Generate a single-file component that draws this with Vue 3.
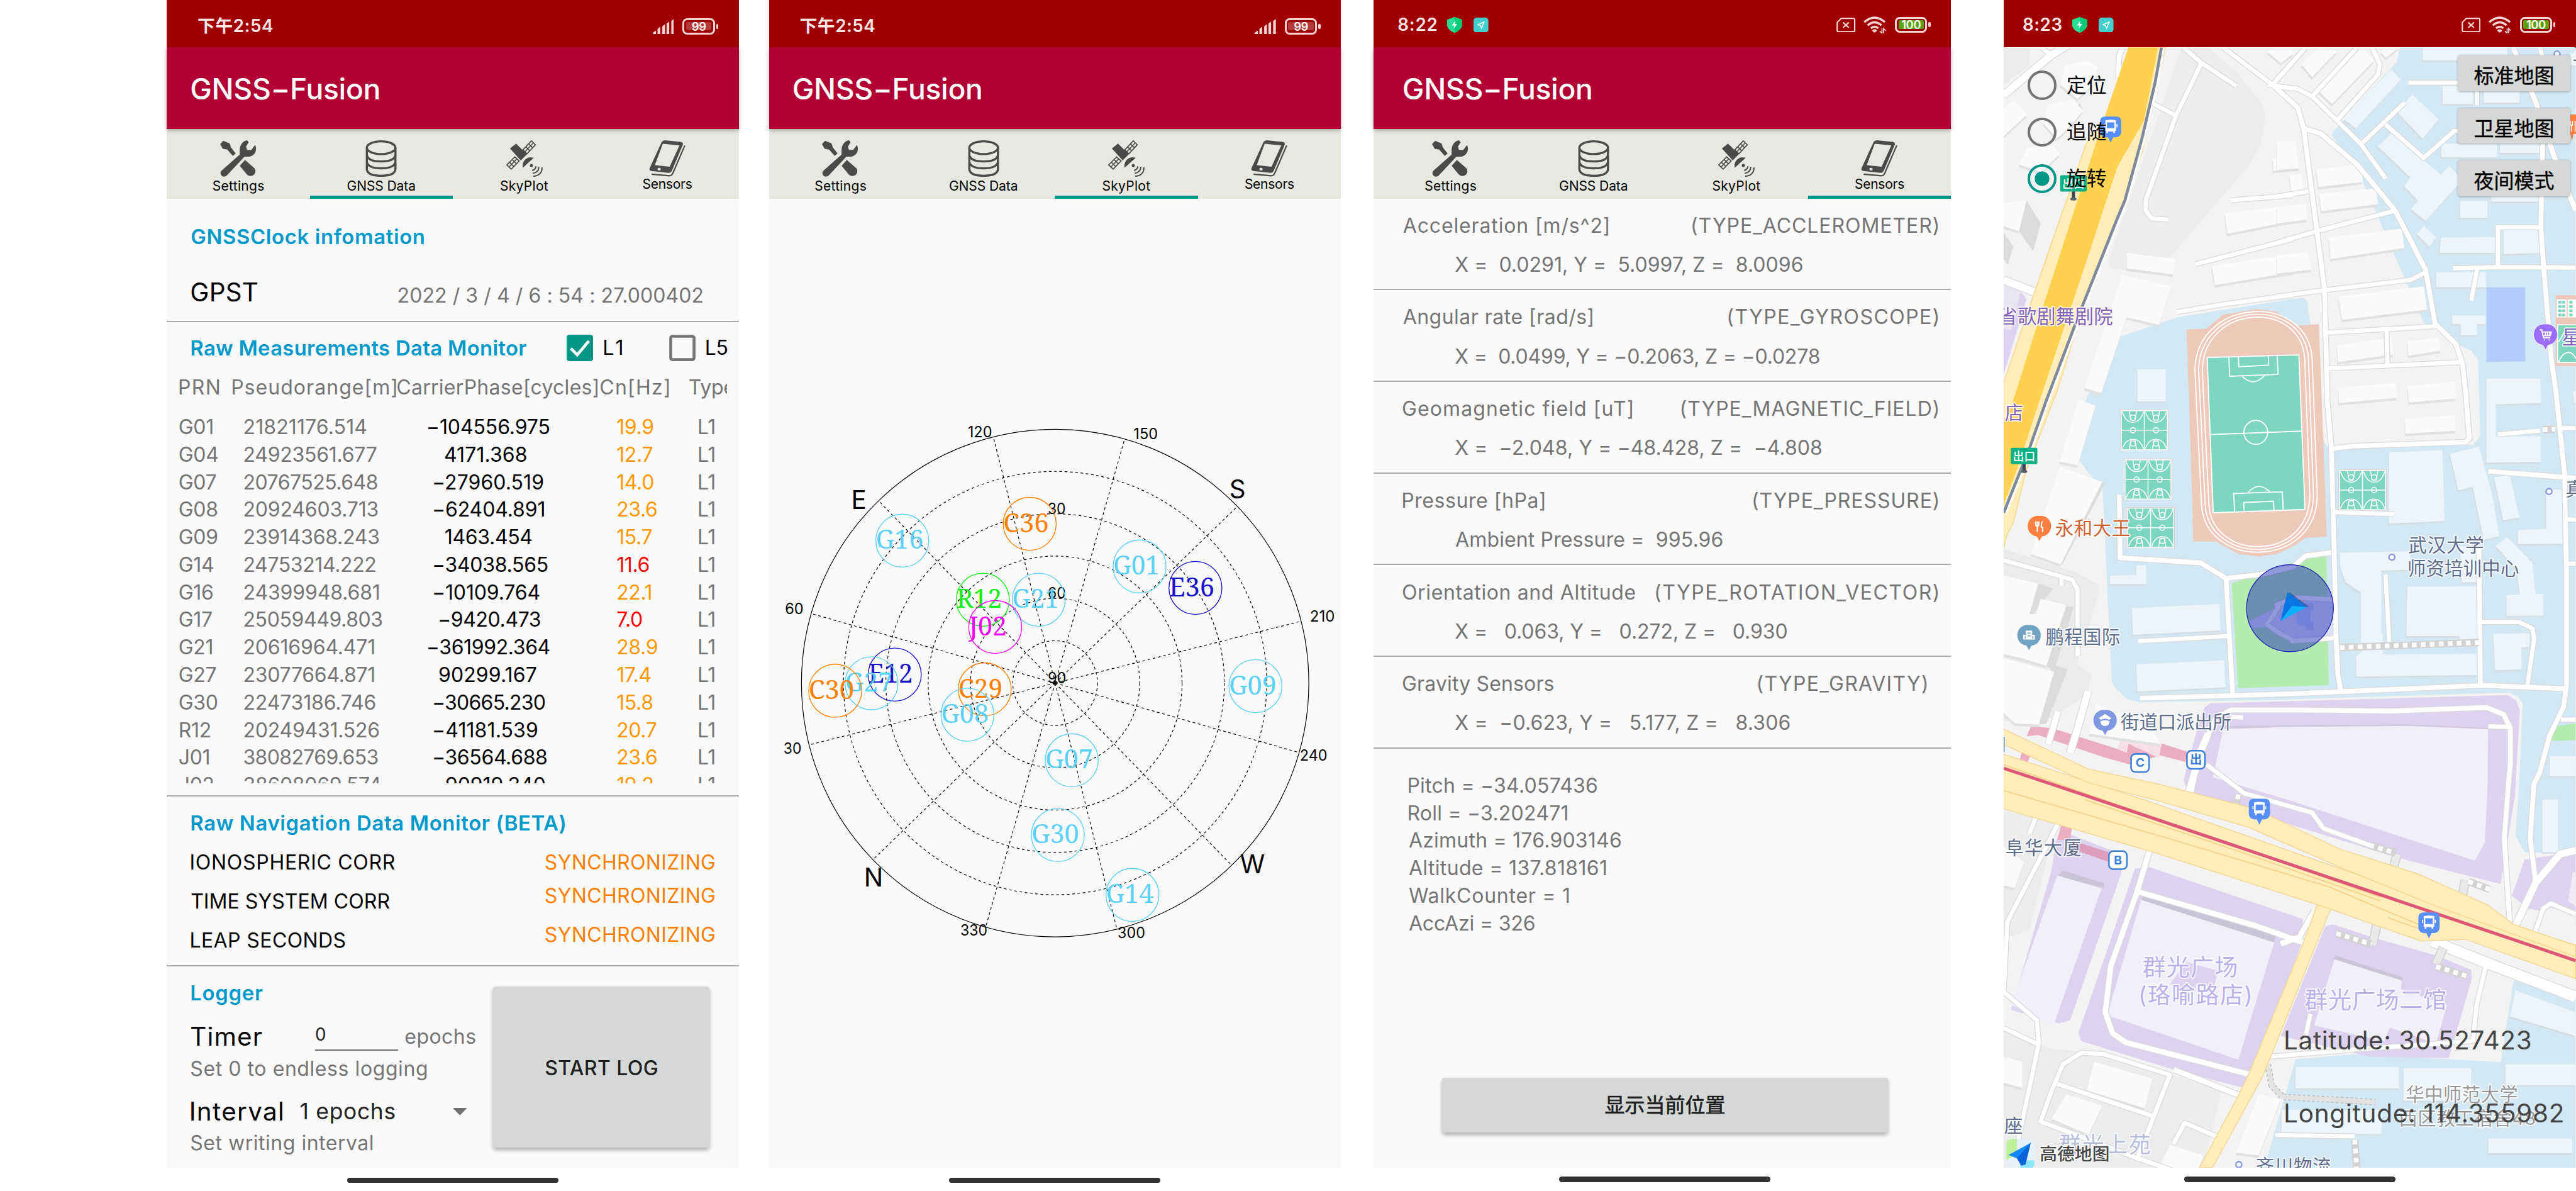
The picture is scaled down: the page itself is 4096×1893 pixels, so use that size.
<script setup>
// Spreads a label's letters so that its ink covers exactly the given width.
const pen = document.createElement('canvas').getContext('2d')
const fit = (el, { value }) => {
  if (!value) return
  const cs = getComputedStyle(el)
  const text = el.textContent
  pen.font = `${cs.fontWeight} ${cs.fontSize} ${cs.fontFamily}`
  const m = pen.measureText(text)
  const ink = m.actualBoundingBoxLeft + m.actualBoundingBoxRight
  const gap = (value - ink) / (text.length - 1)
  el.style.letterSpacing = `${gap.toFixed(3)}px`
  el.style.marginLeft = `${m.actualBoundingBoxLeft.toFixed(2)}px`
  el.style.marginRight = `${(m.actualBoundingBoxRight - m.width - gap).toFixed(2)}px`
}
const vFit = { mounted: fit, updated: fit }

const tabs = [
  { id: 'settings', label: 'Settings', w: 96 },
  { id: 'data', label: 'GNSS Data', w: 128 },
  { id: 'sky', label: 'SkyPlot', w: 90 },
  { id: 'sensors', label: 'Sensors', w: 92 },
]
const phones = [
  { key: 'data', tab: 1, time: '下午2:54', tw: 141, old: true },
  { key: 'sky', tab: 2, time: '下午2:54', tw: 141, old: true },
  { key: 'sensors', tab: 3, time: '8:22', tw: 73 },
  { key: 'map', tab: -1, time: '8:23', tw: 73 },
]

const rows = [
  ['G01', '21821176.514', '−104556.975', '19.9', 231, 229],
  ['G04', '24923561.677', '   4171.368', '12.7', 250, 154],
  ['G07', '20767525.648', ' −27960.519', '14.0', 252, 207],
  ['G08', '20924603.713', ' −62404.891', '23.6', 253, 209],
  ['G09', '23914368.243', '   1463.454', '15.7', 255, 164],
  ['G14', '24753214.222', ' −34038.565', '11.6', 248, 215],
  ['G16', '24399948.681', ' −10109.764', '22.1', 255, 200],
  ['G17', '25059449.803', '  −9420.473', '7.0', 261, 191],
  ['G21', '20616964.471', '−361992.364', '28.9', 246, 230],
  ['G27', '23077664.871', '  90299.167', '17.4', 246, 183],
  ['G30', '22473186.746', ' −30665.230', '15.8', 248, 210],
  ['R12', '20249431.526', ' −41181.539', '20.7', 255, 196],
  ['J01', '38082769.653', ' −36564.688', '23.6', 253, 214],
  ['J02', '38608069.574', ' −90919.340', '19.2', 258, 210],
].map(([prn, range, phase, cn, rw, pw]) => ({
  prn, range, cn, rw, pw,
  phase: phase.trim(),
  indent: (phase.length - phase.trimStart().length) * 10.8,
}))

const spokes = Array.from({ length: 12 }, (_, i) => {
  const a = ((15.9 + 30 * i) * Math.PI) / 180
  return [1992 + 477 * Math.sin(a), 1289 - 477 * Math.cos(a)]
})
const skyLabels = [
  ['120', 1827, 825, 46], ['150', 2140, 829, 46], ['210', 2473, 1173, 47], ['240', 2454, 1436, 52],
  ['300', 2110, 1770, 52], ['330', 1813, 1766, 51], ['30', 1479, 1422, 34], ['60', 1482, 1159, 35],
  ['30', 1978, 970, 34], ['60', 1978, 1129, 34], ['90', 1978, 1289, 35],
]
const compass = [['E', 1607, 960], ['S', 2321, 940], ['N', 1631, 1673], ['W', 2341, 1648]]
const tone = { G: '#5bd1f7', C: '#ff8000', E: '#1a14c8', R: '#14ee14', J: '#f50af5' }
const sats = [
  ['G16', 372, 385, 90], ['C36', 712, 338, 86], ['G01', 1005, 457, 88], ['E36', 1154, 517, 86], ['R12', 587, 550, 86],
  ['G21', 736, 550, 88], ['J02', 620, 626, 72], ['E12', 352, 759, 84], ['G27', 290, 783, 90], ['C30', 193, 804, 86],
  ['C29', 592, 800, 84], ['G08', 546, 871, 90], ['G09', 1314, 791, 90], ['G07', 824, 998, 90], ['G30', 787, 1207, 90],
  ['G14', 986, 1374, 90],
].map(([id, x, y, w]) => ({ id, w, c: tone[id[0]], x: 1440 + x * 0.7079, y: 760 + y * 0.676 }))

const sensors = [
  ['Acceleration [m/s^2]', 388, '(TYPE_ACCLEROMETER)', 463, 'X =  0.0291, Y =  5.0997, Z =  8.0096', 656],
  ['Angular rate [rad/s]', 358, '(TYPE_GYROSCOPE)', 395, 'X =  0.0499, Y = −0.2063, Z = −0.0278', 688],
  ['Geomagnetic field [uT]', 433, '(TYPE_MAGNETIC_FIELD)', 484, 'X =  −2.048, Y = −48.428, Z =  −4.808', 692],
  ['Pressure [hPa]', 267, '(TYPE_PRESSURE)', 348, 'Ambient Pressure =  995.96', 505],
  ['Orientation and Altitude', 439, '(TYPE_ROTATION_VECTOR)', 532, 'X =   0.063, Y =   0.272, Z =   0.930', 626],
  ['Gravity Sensors', 285, '(TYPE_GRAVITY)', 318, 'X =  −0.623, Y =   5.177, Z =   8.306', 632],
]
const pose = [
  ['Pitch = −34.057436', 356], ['Roll = −3.202471', 300], ['Azimuth = 176.903146', 401],
  ['Altitude = 137.818161', 373], ['WalkCounter = 1', 303], ['AccAzi = 326', 238],
]

// The map is stored in five tiles, each with its own origin and scale.
const tiles = {
  A: [3770, 0, 0.35714, 0.48469], B: [4300, 0, 0.35969, 0.48469],
  C: [3770, 740, 0.35714, 0.48469], D: [4300, 740, 0.35969, 0.48469],
  E: [3770, 1480, 0.6977, 0.4898],
}
const P = (s) => {
  let t = tiles.A
  return s.trim().split(/\s+/).map((p) => {
    if (tiles[p[0]]) { t = tiles[p[0]]; p = p.slice(1) }
    const [x, y] = p.split(',').map(Number)
    return `${(t[0] + x * t[2]).toFixed(1)},${(t[1] + y * t[3]).toFixed(1)}`
  }).join(' ')
}
const ground = [
  ['#ededed', 'A980,185 1120,185 1270,280 1400,400 1425,450 1400,560 1340,640 920,1000 860,1045 720,1060 600,1040 595,1010'],
  ['#ebebeb', 'A39,185 180,185 170,260 39,330'],
  ['#ebebeb', 'C39,610 420,700 540,750 540,790 440,1020 430,1060 505,1100 480,1180 220,1300 39,1280'],
  ['#ececec', 'E150,1020 300,1040 610,1180 560,1478 20,1478 20,940 110,1000'],
  ['#ececec', 'E20,100 160,150 90,560 40,590 20,560'],
  ['#d2e8f4', 'B645,185 1568,185 D1568,1568 E1568,245 1500,265 1430,262 1405,200 1415,0 D1290,1215 1270,1190 1220,1170 0,1198 C760,1208 690,1195 625,1150 610,1120 595,900 570,500 560,355 510,335 400,230 400,170 A470,1568 580,1345 620,1320 960,1235 1568,1163 B140,1160 160,1175 175,1260 D245,190 265,215 1030,205 1068,170 B1055,1400 1020,1365 970,1350 860,1290 770,1255 410,640 290,530 290,515 630,240'],
  ['#d2e8f4', 'E1400,755 1568,830 1568,1478 725,1478 810,1060 980,1040 1230,1060 1365,1072'],
  ['#ddd3f0', 'C1130,1212 D0,1205 1210,1180 1255,1200 1275,1240 1250,1568 E1365,385 1090,285 520,35 C990,1510 1060,1320 1100,1230'],
  ['#cfc6df', 'C1195,1300 D0,1298 690,1294 1108,1308 1108,1316 0,1310 C1200,1312'],
  ['#f1effa', 'C1200,1312 1430,1307 D0,1304 690,1300 1108,1313 E1330,0 1322,225 1295,295 800,65 C1145,1500'],
  ['#ddd3f0', 'E175,180 340,270 338,345 200,910 170,922 40,870 150,330 160,225'],
  ['#cac4d8', 'E180,332 292,382 292,400 165,355'],
  ['#f1effa', 'E165,352 285,402 155,930 40,850'],
  ['#ddd3f0', 'E375,325 415,320 830,520 825,620 680,1175 480,1100 230,990 222,960 300,640'],
  ['#cac4d8', 'E398,428 757,585 750,612 392,452'],
  ['#f1effa', 'E392,446 752,610 655,1062 300,890'],
  ['#ddd3f0', 'E515,685 600,720 590,780 540,770 540,800 470,770'],
  ['#ddd3f0', 'E890,548 910,540 1040,600 1190,660 1285,715 1287,750 1225,1055 1010,1050 770,970'],
  ['#cac4d8', 'E917,660 1100,745 1098,760 912,680'],
  ['#f1effa', 'E915,675 1098,757 1095,790 1220,850 1190,1000 1065,938 1050,990 860,930'],
  ['#ddd3f0', 'E1430,290 1568,262 1568,545 1500,495 1440,480 1395,430'],
  ['#efeaf6', 'E1560,340 1568,340 1568,470 1548,450'],
  ['#f3f3f3', 'E1470,500 1500,475 1568,505 1568,600 1460,575'],
  ['#ddd3f0', 'A39,1110 130,1135 160,1165 39,1460'],
  ['#e9e4f4', 'A39,1110 130,1135 80,1285 39,1280'],
  ['#e9adbf', 'C160,1340 185,1300 300,1310 640,1390 670,1335 880,1370 1010,1400 1000,1440 870,1415 705,1450 560,1420 220,1335'],
  ['#f6e0e6', 'C640,1390 660,1340 720,1325 875,1370 860,1425 700,1370 690,1405'],
  ['#e9adbf', 'C140,1390 190,1400 160,1450 485,1528 480,1535 120,1440'],
  ['#e9adbf', 'E165,215 175,160 205,165 200,215'],
  ['#dd9dbf', 'E200,215 305,262 305,300 195,245'],
  ['#b4ebae', 'C1245,745 D150,645 260,640 272,1142 C1278,1153'],
  ['#b4ebae', 'D1470,1300 1568,1290 1568,1355 1435,1358'],
  ['#dfe0ff', 'C1340,890 1480,840 D0,830 100,800 285,805 290,958 80,975 C1500,940 1430,915 1340,920'],
  ['#c4ccff', 'D100,820 190,820 190,850 175,850 175,893 190,893 190,927 155,925 150,912 105,905'],
  ['#b2cdfd', 'B1100,1118 1304,1118 1304,1407 1100,1410'],
].map(([fill, s]) => ({ fill, pts: P(s) }))

const bluish = `B765,185 1210,185 1210,235 765,235|B600,270 650,310 415,500 350,465|B710,368 848,465 765,540 630,435
|B530,570 600,520 860,680 905,648 950,680 950,720 780,860 705,815 740,780 668,725 700,690|B870,335 1030,335 1030,405 870,405
|B1085,355 1272,355 1272,400 1085,400|B862,560 1155,560 1155,612 862,612|B1170,560 1380,560 1380,595 1170,595
|B962,783 1105,783 1105,848 962,848|B770,878 835,925 800,960 735,912|B860,925 1148,922 1148,985 855,985
|B1190,895 1380,895 1380,985 1190,990|B1125,765 1375,765 1375,785 1125,785|B835,1060 1095,1060 1098,1118 835,1118
|B920,1228 1095,1228 1095,1262 1050,1262 1050,1305 965,1305 965,1262 920,1262|B1540,210 1568,200 1568,255 1540,255
|B1100,1475 1382,1475 D1386,42 1148,48 1148,172 1384,172 1384,272 1100,275|B1555,1530 1568,1520 1568,1568 1560,1568
|D588,235 868,226 880,502 588,512|D908,240 1060,213 1130,400 1167,560 1085,575 1028,370 952,382|D1140,332 1222,322 1272,488 1188,500
|D1412,380 1498,380 1498,590 1265,592 1265,538 1412,532|D1148,600 1208,565 1340,665 1358,785 1398,785 1398,870 1205,872 1205,790 1275,788 1258,690
|D328,625 700,620 700,692 548,695 548,1000 440,1000 440,780 360,740 332,680|D684,758 1055,757 1055,965 960,965 960,950 680,950
|D415,1030 555,940 555,1022 1050,1020 1050,1102 415,1108|D1135,942 1325,940 1325,992 1282,995 1285,1080 1145,1083
|D960,600 1055,610 1050,740 970,740|D1432,1418 1568,1418 1568,1495 1432,1495|A745,1438 895,1438 895,1563 745,1563
|C715,842 1180,825 1185,928 722,945|C740,1060 1205,1045 1212,1150 745,1166|C602,715 740,712 740,675 790,675 793,748 602,748
|E810,1090 1090,1090 1090,1172 810,1172|E1102,1095 1285,1095 1285,1220 1102,1220|E1378,1080 1568,1080 1568,1160 1378,1160
|E772,1255 1045,1255 1042,1348 772,1345|E1332,1365 1558,1365 1558,1422 1332,1422|E1405,795 1568,880 1568,970 1390,895
|E1478,60 1520,60 1520,262 1478,262`.split('|').map(P)
const greyish = `A690,985 945,1008 935,1068 690,1045|A665,1070 925,1115 860,1265 690,1235 555,1530 465,1510|A1208,830 1568,800 1568,860 1222,910
|A1140,1035 1568,990 1568,1060 1155,1110|A1500,555 1568,548 1568,655 1465,665 1462,620 1505,615|A485,235 540,260 510,330 430,385 340,330 365,255
|A400,385 460,430 380,500 320,540 250,480 270,410|A165,575 290,560 335,600 240,670 120,640|A39,420 90,390 165,445 39,530
|A39,790 160,780 120,900 39,880|A1430,200 1500,185 1568,185 1568,210 1505,245|C435,30 525,52 430,285 335,270|C335,290 560,350 340,670 185,630
|C39,715 220,745 175,865 210,865 235,805 370,830 265,1065 130,1035 39,1020|C39,1035 305,1090 225,1295 100,1290 39,1250|C530,1212 830,1320 870,1370 490,1330
|B205,660 440,640 450,708 218,728|B222,755 520,733 530,795 232,822|B272,925 655,890 668,965 282,1008|B322,1155 770,1115 788,1205 342,1245
|B315,1345 600,1315 612,1380 320,1410|B685,1330 850,1315 860,1365 690,1385|B322,1510 625,1490 D628,22 325,42|B685,1505 935,1485 D940,25 692,40
|D672,105 932,90 940,150 675,162|B0,550 95,550 118,655 0,662|B65,680 125,680 140,740 75,745|B0,805 150,795 158,855 0,870|B0,995 165,980 180,1050 0,1065
|B128,250 220,185 315,200 185,300|B220,355 450,185 510,235 290,405|B545,200 570,185 640,185 570,225|E265,1070 422,1135 402,1248 245,1180
|E190,1195 287,1240 250,1350 150,1290|E710,1195 770,1215 710,1430 650,1420|E20,240 75,300 50,400 20,390|E470,1390 560,1430 550,1478 440,1478|E20,1050 70,1070 70,1170 20,1150`.split('|').map(P)
const shades = `A160,780 235,870 195,978 120,900|A39,905 90,960 62,1030 39,1010|A485,235 540,260 510,330 480,310|A440,400 460,430 400,500 390,460
|C225,745 300,765 195,865 175,865|C370,835 410,835 315,1065 378,1080 265,1290 225,1295 305,1090 265,1065|C555,350 575,355 350,670 335,665`.split('|').map(P)

const roads = [
  ['A39,370 290,215 400,165', 14], ['A240,185 290,215'], ['A990,185 1085,245 950,450 790,780 790,820 820,850 910,855'],
  ['A1085,245 1270,335'], ['A820,400 950,450'], ['A1200,185 1460,330 1568,400'], ['A1460,330 1568,240'], ['A1440,330 1568,345'],
  ['A1240,780 1568,760'], ['A1055,1028 1568,930'], ['A955,1215 1200,1185 1568,1148'], ['A39,1090 210,1140', 14], ['A670,185 650,215 645,300', 9],
  ['B0,310 150,185'], ['B0,335 105,345 185,375 440,560 570,695'], ['B185,375 420,185'], ['B320,465 530,290 540,250 500,185'],
  ['B0,345 110,420 140,500 210,900 250,1130 265,1568 D285,210 300,600 310,960 320,1100 335,1165', 9],
  ['B140,500 230,520 420,640 620,820 780,1050 830,1260 940,1340 975,1420 D990,0 1010,180 990,195 400,210 290,220', 9],
  ['B0,765 165,745'], ['B0,945 210,900 620,820'], ['B0,1155 250,1130 700,1090 780,1060'], ['B265,1295 840,1270'], ['B575,1280 580,1420'],
  ['B265,1435 970,1410'], ['B450,555 670,400'], ['B570,485 770,615 930,510 950,510'], ['B690,322 950,322'], ['B1050,350 1050,410'],
  ['B1240,185 1360,400 1460,620 1568,820', 9], ['B1380,185 1400,240'],
  ['B1395,560 1385,880 1400,1040 1440,1400 D1465,0 1510,320 1520,700 1520,1140 1505,1225 1430,1340 1380,1480 E1455,0 1445,210 1460,380', 9],
  ['B1150,885 1385,885'], ['B1160,885 1160,1040'], ['B925,1045 1160,1040 1568,1042'], ['B1050,1050 1020,1170'],
  ['C760,1192 1568,1175 D1080,1142 1510,1155', 9], ['C650,400 655,645 1080,665 1215,725 1400,710 1568,680 D150,638 285,625', 9], ['C1215,725 1250,1180', 9],
  ['C750,970 1220,950'], ['D300,467 615,475'], ['D570,710 590,990'], ['D1060,610 1068,1140', 9], ['D1070,895 1270,895 1340,920 1350,960 1315,1140'],
  ['D1110,308 1568,335', 9], ['D1160,165 1380,150'], ['D1480,140 1568,140'], ['D1520,495 1568,497'], ['D1530,668 1568,668'],
  ['C1080,1400 1160,1270 1240,1238 1568,1238 D600,1242 1100,1228 1190,1255 1225,1310 1225,1450 E1386,0 1375,210 1390,540', 9],
  ['D1110,1302 1225,1304'], ['C1240,1265 1305,1267'], ['C1120,1330 1080,1400 1015,1568', 13], ['C1110,1450 1290,1550 E670,35 855,110 885,170 1010,235'], ['D1490,1275 1568,1275'],
  ['C1568,965 1500,940 1430,905 1490,840 D0,828 110,800 290,808'], ['C1560,960 D80,970 300,958'],
  ['C39,655 210,690 400,730 430,770 430,1028'], ['C345,720 345,755'], ['C325,1245 275,1370', 11], ['C485,1165 430,1310 390,1405', 13],
  ['E170,145 30,530 20,800 110,910 115,1000 85,1200 55,1400'], ['E110,115 90,190'], ['E20,940 110,1000'],
  ['E415,255 380,420 310,700 295,880 315,960 350,995 690,1120', 10], ['E385,415 700,545 790,590 830,610', 10], ['E860,490 820,590 770,615', 10],
  ['E480,1100 660,1200', 10], ['E380,1450 470,1120 290,1040 230,1035 180,1080 150,1180 120,1300 380,1440 480,1490'],
  ['E165,1155 425,1280'], ['E480,1385 510,1305 600,1360'], ['E535,-20 525,40', 10], ['E740,1050 990,1020 1290,990 1300,850 1325,700'],
  ['E1180,605 1330,690 1568,820', 20], ['E850,885 830,1020'], ['E1400,560 1460,380 1525,270 1568,255', 13],
  ['E1455,580 1480,480 1500,460 1568,500'], ['E755,1352 970,1357'],
].map(([s, w = 8]) => ({ pts: P(s), w }))

const yellow = [
  'E20,-115 400,60 1190,455 1568,620 1568,750 1270,598 1150,605 870,465 420,260 20,95',
  'C39,1312 E250,-58 440,0 700,95 930,250 1140,345 1330,465 1400,540 1568,622 1568,665 1190,470 930,320 680,165 440,65 250,-5 C39,1372',
  'E868,465 905,480 720,1130 585,1478 550,1478 655,1200 685,1110 830,615',
].map(P)
const lanes = ['E20,25 480,215 900,395 1150,545', 'E20,-75 550,190 1040,435', 'E240,60 700,280 1040,450', 'E1060,515 1150,560 1190,565'].map(P)
const metro = P('C39,1465 E150,0 860,340 1568,680')
const avenue = P('A700,185 575,460 475,560 210,1120 39,1490 C39,610 60,550 90,510 160,300 320,0 A480,1150 640,850 770,600 830,400 895,185')
const avenueCore = P('A700,185 570,460 275,1130 85,1568 C39,110 39,440 110,300 A225,1568 480,1010 640,650 780,470 855,185')
const rail = P('A873,185 840,320 770,540 680,780 640,850 440,1220 260,1568 C175,220 39,470')
const crossings = ['D330,995 1060,975', 'D1395,147 1460,144', 'E655,40 648,95', 'E1010,235 1080,265', 'E920,575 1015,617', 'E1190,703 1275,740', 'E1278,375 1335,405', 'E970,1370 975,1478'].map(P)
const bridges = ['E1085,270 1060,390', 'E1030,540 1018,620', 'E1270,370 1258,450', 'E1210,630 1190,692'].map(P)
const footpath = P('E735,1080 745,1160 775,1205 1025,1225')

const stadium = P('A1005,1283 1110,1280 1200,1225 1380,1203 1500,1215 B0,1217 55,1242 105,1268 220,1262 D262,562 150,568 90,598 0,630 C1390,640 1280,630 1160,582 1042,582 A1020,1568')
const pitch = P('A1115,1392 B115,1382 D147,457 C1147,470')
const marks = ['C1135,165 D130,152', 'A1230,1392 1233,1465 1490,1458 1485,1382', 'A1280,1390 1282,1428 1440,1422 1438,1385', 'C1260,465 1255,395 1512,388 1517,458', 'C1310,462 1308,430 1466,425 1468,460'].map(P)
const tracks = [0, 7, 14].map((d) =>
  `M${4145 + d},698 C${4148 + d},${560 + d} ${4360 - d},${550 + d} ${4366.5 - d},678.5 L${4376 - d},934 C${4376 - d},${1075 - d} ${4165 + d},${1075 - d} ${4157.5 + d},953 Z`)
const courts = [[4006, 775], [4013, 868], [4018, 959], [4418, 888]]

const places = [
  ['省歌剧舞剧院', 3774, 610, 216, 36, 'violet'], ['店', 3786, 791, 35, 35, 'violet'], ['永和大王', 3881, 1009, 142, 35, 'rust'],
  ['鹏程国际', 3863, 1215, 141, 35, 'slate'], ['街道口派出所', 4005, 1375, 209, 35, 'slate'], ['口', 3755, 1417, 35, 35, 'slate'],
  ['武汉大学', 4548, 1041, 143, 35, 'slate'], ['师资培训中心', 4546, 1085, 211, 35, 'slate'], ['真', 4845, 936, 35, 35, 'slate'],
  ['星', 4838, 649, 36, 36, 'violet'], ['工', 4858, 114, 35, 35, 'slate'], ['阜华大厦', 3787, 1613, 144, 35, 'slate'],
  ['群光广场', 4046, 1842, 180, 44, 'lilac'], ['(珞喻路店)', 4038, 1894, 216, 44, 'lilac'], ['群光广场二馆', 4352, 1903, 268, 44, 'lilac'],
  ['华中师范大学', 4543, 2078, 212, 35, 'ash'], ['西区教工宿舍48', 4530, 2123, 259, 35, 'ash'], ['座', 3785, 2137, 35, 35, 'slate'],
  ['群光上苑', 3888, 2175, 174, 42, 'mist'], ['齐川物流', 4260, 2213, 142, 35, 'slate'],
]
const pins = [
  { x: 3851.4, y: 993, c: '#fd8040', k: 'food' }, { x: 3831.8, y: 1199, c: '#71a2c2', k: 'tower' },
  { x: 3975.4, y: 1359.4, c: '#8097e1', k: 'police' }, { x: 4807, y: 631.5, c: '#9a6dfa', k: 'cart' },
]
const buses = [[3986, 240], [4266.8, 1527.5], [4587, 1742]]
const exits = [[3797.5, 845], [3890.7, 330.6]]
const gates = [['C', 4022.5, 1421], ['出', 4128, 1415], ['B', 3980.7, 1604.4]]
const dots = [[4517, 1051.6], [4813.6, 927.6], [4828.8, 102], [4228, 2198]]
</script>

<template>
  <main class="page">
    <section v-for="ph in phones" :key="ph.key" class="phone" :class="ph.key">
      <header class="status" :class="{ old: ph.old }">
        <span v-fit="ph.tw" class="clock">{{ ph.time }}</span>
        <template v-if="!ph.old">
          <svg class="shield" viewBox="0 0 28 30"><path d="M14 0 28 5V17Q26 25 14 30Q2 25 0 17V5Z" fill="#27dd92" /><path d="M14 0 28 5V17Q26 25 14 30Z" fill="#06cb7b" /><path d="M15.5 7 9 16h4.500L12.500 22 19 13h-4.500Z" fill="#fff" /></svg>
          <svg class="nav-app" viewBox="0 0 28 28"><rect width="28" height="28" rx="6" fill="#42d0cf" /><path d="M20 8 8 13.500 13 15 15 20Z" fill="none" stroke="#fff" stroke-width="1.800" stroke-linejoin="round" /></svg>
        </template>
        <span class="spacer"></span>
        <svg v-if="ph.old" class="signal" viewBox="0 0 40 29"><path d="M0 29V26L6 22V29ZM9 29V19L14 15V29ZM18 29V14L23 10V29ZM26 29V9L31 5V29ZM35 29V4L40 0V29Z" fill="#f6d5d5" /></svg>
        <template v-else>
          <svg class="sim" viewBox="0 0 36 28"><path d="M9 1.500H32Q34.500 1.500 34.500 4V24Q34.500 26.500 32 26.500H4Q1.500 26.500 1.500 24V9Z" fill="none" stroke="#f6d5d5" stroke-width="2.600" /><path d="M12.500 9 23.500 19M23.500 9 12.500 19" stroke="#f6d5d5" stroke-width="2.600" /></svg>
          <svg class="wifi" viewBox="0 0 42 32"><g fill="none" stroke="#f6d5d5" stroke-width="4"><path d="M1.500 11Q21-6.500 40.500 11" /><path d="M8 17Q21 5.500 34 17" /><path d="M14 22.500Q21 16.500 28 22.500" /></g><path d="M16 27Q21 22 26 27L21 31Z" fill="#f6d5d5" /><path d="M35 23V32L31 28M38 32V23L42 27" fill="none" stroke="#f6d5d5" stroke-width="2" /></svg>
        </template>
        <span class="battery" :class="{ full: !ph.old }"><b>{{ ph.old ? '99' : '100' }}</b></span>
      </header>

      <template v-if="ph.tab >= 0">
        <div class="title"><span v-fit="354">GNSS−Fusion</span></div>
        <nav class="tabs">
          <div v-for="(t, i) in tabs" :key="t.id" class="tab" :class="['t-' + t.id, { on: i === ph.tab }]">
            <svg v-if="t.id === 'settings'" viewBox="0 0 69 69" fill="#4a4a4a">
              <path d="M0 7 6 1 18 6 20.500 13.500 29.500 25 24 29.500 13.500 17.500 5 16Z" /><path d="M47 37 37 48 51 65Q57 70 64 65Q69 59 65 53Z" />
              <path d="M51 0 54 4 49 12 51 18 59 18 66 9C71 19 65 30 54 31L46 31 14 65Q9 71 3 67Q-1 63 2 58L37 27V17C38 8 43 1 51 0Z" />
            </svg>
            <svg v-else-if="t.id === 'data'" viewBox="0 0 69 69" fill="none" stroke="#4a4a4a" stroke-width="4">
              <ellipse cx="34.500" cy="14" rx="27" ry="12" /><path d="M7.500 14V55Q9 67 34.500 67Q60 67 61.500 55V14M7.500 28Q10 40 34.500 40Q59 40 61.500 28M7.500 41Q10 53 34.500 53Q59 53 61.500 41" />
            </svg>
            <svg v-else-if="t.id === 'sky'" viewBox="0 0 69 69" fill="none" stroke="#4a4a4a" stroke-width="2">
              <path d="M8.500 15.500 18.500 7.500 37.500 26.500 27.500 36.500Z" fill="#4a4a4a" />
              <path d="M31.500 18 47.500 1 55 8.500 39 25.500ZM35 22 51 5M37 12.500 44.500 20M42.500 7 50 14.500" /><path d="M1 46.500 16 31.500 24.500 39 9.500 54.500ZM5 50.500 20 35M6 41.500 14.500 49.500M11 36.500 19.500 44.500" />
              <path d="M32 50C31 39 40 31 50 33.500Z" fill="#4a4a4a" /><circle cx="47.500" cy="47.500" r="2" fill="#4a4a4a" />
              <path d="M56 49Q56 55 49 57M61.500 50Q62 60 50 62.500M67.500 51Q68 66 51 68" stroke-width="2.400" />
            </svg>
            <svg v-else viewBox="0 0 69 69">
              <path fill-rule="evenodd" fill="#4a4a4a" d="M30 0 60 3Q65 4 64 8L43 58Q41 62 37 61.500L4 58Q0 57 1 53L24 3Q26 0 30 0ZM26 6.500 11 47 39 50 57.500 9.500ZM19 52A2.500 2 0 1 0 19.200 57A2.500 2 0 1 0 19 52Z" />
              <path d="M67.500 10 45 62Q43 67 38 67L5 64" fill="none" stroke="#4a4a4a" stroke-width="2.600" />
            </svg>
            <span v-fit="t.w">{{ t.label }}</span>
          </div>
        </nav>
      </template>

      <div v-if="ph.key === 'data'" class="body">
        <div class="block clock-info">
          <h2><span v-fit="440">GNSSClock infomation</span></h2>
          <div class="gpst"><span v-fit="125" class="big">GPST</span><span v-fit="575" class="muted stamp">2022 / 3 / 4 / 6 : 54 : 27.000402</span></div>
        </div>
        <div class="block monitor">
          <div class="monitor-head">
            <h2><span v-fit="633">Raw Measurements Data Monitor</span></h2>
            <label><svg class="box" viewBox="0 0 50 50"><rect width="50" height="50" rx="5" fill="#009688" /><path d="M8 26 20 38 42 12" fill="none" stroke="#fafafa" stroke-width="5.500" /></svg><span v-fit="34">L1</span></label>
            <label><svg class="box" viewBox="0 0 50 50"><rect x="3" y="3" width="44" height="44" rx="3" fill="none" stroke="#757575" stroke-width="5.500" /></svg><span v-fit="39">L5</span></label>
          </div>
          <div class="thead"><span v-fit="75">PRN</span><span v-fit="309">Pseudorange[m]</span><span v-fit="378">CarrierPhase[cycles]</span><span v-fit="129">Cn[Hz]</span><span v-fit="86">Type</span></div>
          <div class="table">
            <div v-for="r in rows" :key="r.prn" class="tr">
              <span class="prn">{{ r.prn }}</span><span class="cell range"><i v-fit="r.rw">{{ r.range }}</i></span>
              <span class="cell phase" :style="{ paddingLeft: r.indent + 'px' }"><i v-fit="r.pw">{{ r.phase }}</i></span>
              <span class="cn" :class="{ low: +r.cn < 12 }">{{ r.cn }}</span><span class="type">L1</span>
            </div>
          </div>
        </div>
        <div class="block nav-data">
          <h2><span v-fit="705">Raw Navigation Data Monitor (BETA)</span></h2>
          <div class="corr">
            <div class="names"><p><span v-fit="385">IONOSPHERIC CORR</span></p><p><span v-fit="375">TIME SYSTEM CORR</span></p><p><span v-fit="291">LEAP SECONDS</span></p></div>
            <div class="states"><p><span v-fit="319">SYNCHRONIZING</span></p><p><span v-fit="319">SYNCHRONIZING</span></p><p><span v-fit="319">SYNCHRONIZING</span></p></div>
          </div>
        </div>
        <div class="logger">
          <div class="form">
            <h2><span v-fit="135">Logger</span></h2>
            <div class="line timer"><span v-fit="133" class="big">Timer</span><span class="input">0</span><span v-fit="133" class="muted">epochs</span></div>
            <div class="hint"><span v-fit="445">Set 0 to endless logging</span></div>
            <div class="line interval"><span v-fit="172" class="big">Interval</span><span v-fit="179" class="choice">1 epochs</span><svg viewBox="0 0 27 14"><path d="M0 0H27L13.500 14Z" fill="#707070" /></svg></div>
            <div class="hint last"><span v-fit="343">Set writing interval</span></div>
          </div>
          <button class="btn start"><span v-fit="212">START LOG</span></button>
        </div>
      </div>

      <div v-else-if="ph.key === 'sky'" class="body">
        <svg class="plot" viewBox="1452 375 1080 1829">
          <g fill="none" stroke="#000" stroke-width="1.400">
            <circle cx="1992" cy="1289" r="479" />
            <g stroke-dasharray="5 5"><circle v-for="n in 5" :key="n" cx="1992" cy="1289" :r="79.900 * n" /><path v-for="([x, y], i) in spokes" :key="i" :d="`M1992 1289L${x} ${y}`" /></g>
          </g>
          <text v-for="([s, x, y, w], i) in skyLabels" :key="i" class="deg" :x="x" :y="y" :textLength="w" lengthAdjust="spacingAndGlyphs">{{ s }}</text>
          <text v-for="[s, x, y] in compass" :key="s" class="compass" :x="x" :y="y">{{ s }}</text>
          <g v-for="s in sats" :key="s.id">
            <circle :cx="s.x" :cy="s.y" r="50" fill="none" :stroke="s.c" stroke-width="1.600" />
            <text class="sat" :x="s.x - 50" :y="s.y + 15.5" :textLength="s.w" lengthAdjust="spacingAndGlyphs" :fill="s.c">{{ s.id }}</text>
          </g>
        </svg>
      </div>

      <div v-else-if="ph.key === 'sensors'" class="body">
        <div v-for="s in sensors" :key="s[0]" class="sensor">
          <div class="sensor-head"><span v-fit="s[1]">{{ s[0] }}</span><span v-fit="s[3]">{{ s[2] }}</span></div>
          <div class="sensor-value"><span v-fit="s[5]">{{ s[4] }}</span></div>
        </div>
        <div class="pose"><p v-for="[s, w] in pose" :key="s"><span v-fit="w">{{ s }}</span></p></div>
        <button class="btn show"><span>显示当前位置</span></button>
      </div>

      <div v-else class="body">
        <svg class="chart" viewBox="3784 89 1080 2115" preserveAspectRatio="none">
          <rect x="3784" y="89" width="1080" height="2115" fill="#f3f3f3" />
          <polygon v-for="(g, i) in ground" :key="'g' + i" :points="g.pts" :fill="g.fill" />
          <polygon v-for="(b, i) in shades" :key="'d' + i" :points="b" fill="#dadcdc" />
          <g v-for="(b, i) in greyish" :key="'w' + i"><polygon :points="b" fill="#e0e2e2" transform="translate(-1 5)" /><polygon :points="b" fill="#fafafa" /></g>
          <g v-for="(b, i) in bluish" :key="'b' + i"><polygon :points="b" fill="#d4dde4" transform="translate(-1.500 3)" /><polygon :points="b" fill="#edf5fc" /></g>
          <polygon :points="stadium" fill="#eec9ba" />
          <path v-for="t in tracks" :key="t" :d="t" fill="none" stroke="#fff" stroke-width="2.200" />
          <g fill="none" stroke="#fff" stroke-width="2.200">
            <polygon :points="pitch" fill="#7cd6c0" /><polyline v-for="m in marks" :key="m" :points="m" />
            <circle cx="4260" cy="816" r="22.500" /><path d="M4234 710Q4256 732 4277 708M4245 930Q4265 907 4286 928" />
          </g>
          <g v-for="[x, y] in courts" :key="x" :transform="`translate(${x} ${y})`" fill="none" stroke="#fff" stroke-width="1.800">
            <rect x="-2" y="-2" width="91" height="77" fill="#eec9ba" stroke="none" /><rect width="87" height="74" fill="#7cd6c0" />
            <path d="M43.500 0V74M0 37H87" />
            <g v-for="c in 2" :key="c" :transform="`translate(${(c - 1) * 43.500} 0)`"><circle cx="22" cy="37" r="5" /><path d="M2 2Q8 22 22 22Q36 22 42 2M15 0 18 18H26L29 0M2 72Q8 54 22 54Q36 54 42 72M15 74 18 57H26L29 74" /><circle cx="22" cy="13" r="5" /><circle cx="22" cy="62" r="5" /></g>
          </g>
          <g fill="none" stroke="#fff" stroke-width="2">
            <rect x="4826" y="557" width="40" height="134" fill="#eec9ba" stroke="none" />
            <rect x="4829" y="566" width="17" height="32" fill="#fff" /><rect x="4850" y="566" width="17" height="32" fill="#fff" />
            <path d="M4834 568V597M4841 568V597M4855 568V597" stroke="#7cd6c0" stroke-width="6" stroke-dasharray="5 3" />
            <rect x="4830" y="613" width="40" height="71" fill="#7cd6c0" /><path d="M4832 684Q4838 665 4852 665Q4862 667 4868 684M4832 645 4848 618" />
          </g>
          <g fill="none" stroke-linejoin="round">
            <polyline v-for="(r, i) in roads" :key="'c' + i" :points="r.pts" stroke="#d8d9da" :stroke-width="r.w + 3" />
            <polyline v-for="(r, i) in roads" :key="'r' + i" :points="r.pts" stroke="#fff" :stroke-width="r.w" />
            <polyline v-for="b in bridges" :key="b" :points="b" stroke="#d2d2d2" stroke-width="18" />
            <polyline v-for="b in bridges" :key="b + 'i'" :points="b" stroke="#e9e9e9" stroke-width="14" />
            <g v-for="c in crossings" :key="c"><polyline :points="c" stroke="#d2d2d2" stroke-width="14" /><polyline :points="c" stroke="#fbfbfb" stroke-width="9" stroke-dasharray="9 8" /></g>
            <polyline :points="footpath" stroke="#b5b5b5" stroke-width="12" stroke-dasharray="5 4" /><polyline :points="footpath" stroke="#e2e2e2" stroke-width="9" />
          </g>
          <polygon v-for="y in yellow" :key="y" :points="y" fill="#ffedb9" stroke="#f6d48e" stroke-width="1.500" />
          <polyline v-for="l in lanes" :key="l" :points="l" fill="none" stroke="#f6d28a" stroke-width="2.200" />
          <polyline :points="metro" fill="none" stroke="#dc5678" stroke-width="6" />
          <polygon :points="avenue" fill="#ffedb9" stroke="#fbd584" stroke-width="1.500" />
          <polygon :points="avenueCore" fill="#fed250" />
          <polyline :points="rail" fill="none" stroke="#fff" stroke-width="9" transform="translate(2 1)" />
          <polyline :points="rail" fill="none" stroke="#7e8a99" stroke-width="5.500" />

          <g v-for="[x, y] in exits" :key="y">
            <rect :x="x + 22" :y="y + 30" width="6" height="14" fill="#3a4658" /><ellipse :cx="x + 25" :cy="y + 45" rx="6" ry="3" fill="#5d6470" />
            <rect :x="x" :y="y" width="50" height="31" rx="2" fill="#0cb184" /><text class="exit" :x="x + 25" :y="y + 24" text-anchor="middle" textLength="42">出口</text>
          </g>
          <g v-for="[x, y] in buses" :key="y" :transform="`translate(${x} ${y})`">
            <path d="M-20-10Q-20-20-10-20H10Q20-20 20-10V8Q20 17 11 19H5L0 29-5 19H-11Q-20 17-20 8Z" fill="#568ffa" />
            <path fill-rule="evenodd" fill="#fff" d="M-10-13Q0-15 10-13V7H8V11H5V8H-5V11H-8V7H-10ZM-7-9V2H7V-9Z" /><path d="M-12-6V0M12-6V0" stroke="#fff" stroke-width="2" />
          </g>
          <g v-for="p in pins" :key="p.k" :transform="`translate(${p.x} ${p.y})`">
            <path d="M0-20A20 20 0 0 1 5 20L0 29-5 20A20 20 0 0 1 0-20Z" :fill="p.c" stroke="#fff" />
            <path v-if="p.k === 'food'" d="M-7-9V-3Q-7 0-4 0Q-1 0-1-3V-9M-4-9V11M6-9Q3-6 4 2H6V11" fill="none" stroke="#fff" stroke-width="2.400" />
            <path v-else-if="p.k === 'tower'" fill-rule="evenodd" fill="#fff" d="M-11 8V-1H-6V-9H6V-1H11V8ZM-3-5V-3H3V-5ZM-3 0V2H3V0ZM-8 2V6H-6V2ZM6 2V6H8V2Z" />
            <path v-else-if="p.k === 'police'" fill="#fff" d="M0-12 12-4 8-1Q0-5-8-1L-12-4ZM-9 2Q0-2 9 2L7 8Q0 14-7 8Z" />
            <path v-else d="M-11-9H-7L-4 6H9M-6-5H11L9 2H-5M-3 10H-1M6 10H8M0-5V2M4-5V2M8-5V2" fill="none" stroke="#fff" stroke-width="2.200" />
          </g>
          <g transform="translate(4868 236)"><path d="M-17-14Q-17-20-11-20H11V17H-8L-11 30-14 17Q-17 15-17 10Z" fill="#fd8040" /><path d="M-14-8V0H-10V-8M-12 0V12M-5-8V12" stroke="#fff" stroke-width="2" fill="none" /></g>
          <circle v-for="[x, y] in dots" :key="x" :cx="x" :cy="y" r="5.500" fill="#fff" stroke="#8b9cdb" stroke-width="3" />
          <g v-for="[s, x, y] in gates" :key="s">
            <rect :x="x + 2" :y="y + 2" width="34" height="34" rx="8" fill="#fff" stroke="#3c80d8" stroke-width="3" />
            <text class="gate" :x="x + 19" :y="y + 27" text-anchor="middle">{{ s }}</text>
          </g>
          <text v-for="[s, x, y, w, f, k] in places" :key="s + y" class="place" :class="k" :x="x" :y="y" :font-size="f" :textLength="w">{{ s }}</text>

          <circle cx="4324.600" cy="1148" r="82" fill="rgba(34,51,180,.5)" stroke="#1c1fb0" stroke-width="1.500" />
          <path d="M4323 1117 4360 1145 4331 1150Z" fill="rgba(20,30,60,.4)" />
          <path d="M4319.800 1117 4328.800 1143.800 4306.500 1172.400Z" fill="#0a76e6" /><path d="M4319.800 1117 4356.500 1145.700 4328.800 1143.800Z" fill="#0a76e6" /><path d="M4356.500 1145.700 4306.500 1172.400 4328.800 1143.800Z" fill="#0bb3fd" />
          <g transform="translate(3789 2150)">
            <rect width="53" height="56" rx="10" fill="#e6f2fb" /><path d="M0 10Q0 0 10 0H20V28L0 40Z" fill="#bdf29a" /><path d="M26 40H53V46Q53 56 43 56H26Z" fill="#8fe6fb" />
            <path d="M46 7 4 30 20 36 36 48Z" fill="#1389fd" /><path d="M46 7 20 36 28 50 36 48Z" fill="#0a63d8" />
          </g>
          <text class="amap" x="3852" y="2190" textLength="132">高德地图</text>
        </svg>
        <div class="modes">
          <label v-for="(m, i) in ['定位', '追随', '旋转']" :key="m"><span class="radio" :class="{ on: i === 2 }"></span>{{ m }}</label>
        </div>
        <div class="layers"><button v-for="m in ['标准地图', '卫星地图', '夜间模式']" :key="m" class="btn layer">{{ m }}</button></div>
        <div class="position"><p><span v-fit="462">Latitude: 30.527423</span></p><p><span v-fit="523">Longitude: 114.355982</span></p></div>
      </div>
      <footer><span class="pill"></span></footer>
    </section>
  </main>
</template>

<style>
html, body { margin: 0; background: #fff; overflow: hidden; }
</style>
<style scoped>
.page { zoom: 0.842105; width: 4864px; height: 2248px; box-sizing: border-box; padding-left: 315px; display: flex; background: #fff; overflow: hidden; font-family: Inter, "Noto Sans CJK SC", sans-serif; font-size: 38px; color: #000; }
.page * { box-sizing: border-box; }
.page span, .page i { white-space: pre; font-style: normal; }
h2, p { margin: 0; font-weight: inherit; font-size: inherit; }
svg { display: block; flex: none; }
.phone { width: 1080px; height: 2248px; display: flex; flex-direction: column; flex: none; }
.phone.sky { margin-left: 57px; }
.phone.sensors { margin-left: 61px; width: 1091px; }
.phone.map { margin-left: 100px; }
.sensors .status, .sensors .title, .sensors .tabs, .sensors .body { padding-left: 11px; }

.status { height: 89px; background: #9f0000; display: flex; align-items: center; padding-right: 39px; padding-top: 5px; flex: none; }
.status.old { padding-left: 59px; padding-top: 11px; }
.clock { font-size: 33px; font-weight: 600; color: #fbe4e4; line-height: 40px; }
.status:not(.old) .clock { padding-left: 36px; }
.shield { width: 28px; height: 30px; margin-left: 20px; }
.nav-app { width: 28px; height: 28px; margin-left: 22px; }
.spacer { flex: 1; }
.signal { width: 40px; height: 29px; margin-right: 17px; }
.sim { width: 36px; height: 28px; margin-right: 15px; }
.wifi { width: 42px; height: 32px; margin-right: 17px; }
.battery { position: relative; width: 61px; height: 30px; margin-right: 6px; border: 4px solid #f6d5d5; border-radius: 9px; padding: 3px; display: flex; }
.battery b { flex: 1; background: #b33a3a; border-radius: 3px; color: #fff; font-size: 22px; line-height: 17px; height: 16px; text-align: center; font-weight: 600; letter-spacing: -0.5px; }
.battery.full b { background: #5fa012; }
.battery::after { content: ""; position: absolute; right: -10px; top: 6px; width: 4px; height: 10px; border-radius: 2px; background: #f6d5d5; }

.title { height: 154px; background: #b20035; color: #fff; font-size: 55px; font-weight: 500; line-height: 154px; flex: none; box-shadow: 0 3px 8px rgba(0, 0, 0, 0.3); position: relative; z-index: 1; }
.title span { display: inline-block; position: relative; left: 47px; line-height: 158px; }
.tabs { height: 132px; background: #e7e8e2; display: flex; flex: none; }
.tab { width: 270px; height: 132px; padding-top: 22px; display: flex; flex-direction: column; align-items: center; font-size: 25px; line-height: 30px; border-bottom: 6px solid transparent; }
.tab svg { width: 69px; height: 69px; margin-bottom: 2px; }
.t-sensors svg { margin-bottom: -1px; }
.tab.on { border-bottom-color: #009688; }
.body { position: relative; flex: 1; background: #fafafa; overflow: hidden; }

h2 { color: #0099cc; font-weight: 600; font-size: 39px; white-space: nowrap; }
.big { font-size: 48px; }
.muted { color: #757575; }
.block { border-bottom: 3px solid #aaa; }
.clock-info { height: 233px; padding: 42px 0 0 46px; line-height: 60px; }
.gpst { display: flex; align-items: center; height: 82px; margin-top: 34px; }
.gpst .stamp { position: relative; top: 7px; left: 266px; }
.monitor { height: 895px; }
.monitor-head { display: flex; align-items: center; height: 98px; padding-left: 46px; line-height: 62px; position: relative; }
.monitor-head label { display: flex; align-items: center; gap: 21px; width: 193px; flex: none; }
.monitor-head h2 { width: 709px; flex: none; }
.box { width: 50px; height: 50px; }
.thead { display: grid; grid-template-columns: 100px 311.5px 383.5px 167px 72px; margin: 0 22px 0 24px; width: 1034px; height: 50px; line-height: 53px; color: #757575; overflow: hidden; }
.thead span { justify-self: start; }
.table { height: 699px; margin-top: 23px; padding-left: 22px; overflow: hidden; }
.tr { display: grid; grid-template-columns: 124px 347px 356px 153px 80px; height: 52px; line-height: 55px; color: #757575; letter-spacing: -0.4px; }
.cell { display: block; }
.cell i { display: inline-block; }
.phase { color: #000; }
.cn { color: #ff9800; }
.cn.low { color: #ff0000; }
.nav-data { height: 321px; padding: 25px 46px 0 46px; line-height: 50px; }
.corr { display: flex; justify-content: space-between; margin-top: 13px; }
.names p { height: 74px; line-height: 74px; }
.states { color: #ff8000; }
.states p { height: 74px; line-height: 74px; }
.states p:nth-child(2) { height: 53px; line-height: 53px; }
.states p:nth-child(3) { height: 93px; line-height: 93px; }
.logger { display: flex; justify-content: space-between; padding: 38px 55px 0 46px; }
.form h2 { height: 22px; line-height: 24px; }
.line { display: flex; align-items: center; }
.timer { height: 92px; margin-top: 26px; }
.timer .input { width: 157px; margin: 0 13px 0 101px; height: 54px; line-height: 48px; border-bottom: 3px solid #707070; font-size: 33px; color: #222; }
.hint { color: #757575; height: 40px; line-height: 40px; margin-top: -5px; }
.interval { height: 70px; margin-top: 26px; }
.interval .choice { font-size: 42px; color: #212121; padding-left: 34px; }
.interval svg { width: 27px; height: 14px; margin-left: 109px; }
.hint.last { margin-top: 5px; }
.btn { border: 0; padding: 0; background: #d6d8d7; border-radius: 5px; box-shadow: 0 4px 7px rgba(0, 0, 0, 0.3); font: 500 38px Inter, "Noto Sans CJK SC", sans-serif; color: #1d1f1e; text-align: center; display: block; }
.start { width: 409px; height: 304px; line-height: 304px; padding-top: 2px; }

.plot { width: 1080px; height: 1829px; }
.deg { font-size: 29px; }
.compass { font-size: 48px; }
.sat { font-family: "Noto Serif", "Noto Serif CJK SC", "Liberation Serif", serif; font-size: 50px; }

.sensor { height: 173px; margin-left: -11px; padding: 25px 25px 0 56px; border-bottom: 3px solid #aaa; color: #757575; line-height: 52px; }
.sensor:nth-child(6) { padding-right: 46px; }
.sensor-head { display: flex; justify-content: space-between; height: 50px; }
.sensor-value { height: 50px; margin-top: 24px; padding-left: 99px; }
.pose { padding: 44px 0 0 56px; color: #757575; line-height: 52px; }
.show { width: 842px; height: 103px; margin: 265px 0 0 119px; line-height: 103px; padding-top: 2px; font-weight: 400; -webkit-text-stroke: 0.8px #1d1f1e; }

.chart { width: 1080px; height: 2115px; }
.exit { fill: #fff; font-size: 21px; font-weight: 500; }
.gate { fill: #3c80d8; font-size: 23px; font-weight: 700; }
.place { paint-order: stroke; stroke: rgba(255, 255, 255, 0.85); stroke-width: 4px; stroke-linejoin: round; }
.violet { fill: #8463b8; }
.rust { fill: #cb6030; }
.slate { fill: #5e6d8c; }
.lilac { fill: #b9b1e8; }
.ash { fill: #9a9a9a; }
.mist { fill: #b7bedb; }
.amap { font-size: 33px; font-weight: 500; fill: #444; paint-order: stroke; stroke: #fff; stroke-width: 3px; }
.modes { position: absolute; left: 44px; top: 28px; }
.modes label { display: flex; align-items: center; height: 88px; gap: 19px; line-height: 90px; }
.radio { width: 55px; height: 55px; border: 5.5px solid #737373; border-radius: 50%; }
.radio.on { border-color: #009688; background: radial-gradient(circle, #009688 13.5px, transparent 14px); }
.layers { position: absolute; right: 11px; top: 16px; display: flex; flex-direction: column; gap: 32px; }
.layer { width: 212px; height: 67px; line-height: 67px; padding-top: 6px; color: #000; font-weight: 400; -webkit-text-stroke: 0.5px #000; box-shadow: 0 1px 4px rgba(0, 0, 0, 0.3); }
.position { position: absolute; left: 532px; top: 1825px; font-size: 48px; color: #444; line-height: 100px; white-space: nowrap; }
.position p { height: 138px; }

footer { height: 44px; flex: none; background: #fff; padding-top: 19px; }
.sensors footer, .map footer { padding-top: 17px; }
.pill { display: block; width: 399px; height: 10px; border-radius: 5px; background: #333; margin: 0 auto; }
.sensors .pill { margin-left: 351px; }
</style>
